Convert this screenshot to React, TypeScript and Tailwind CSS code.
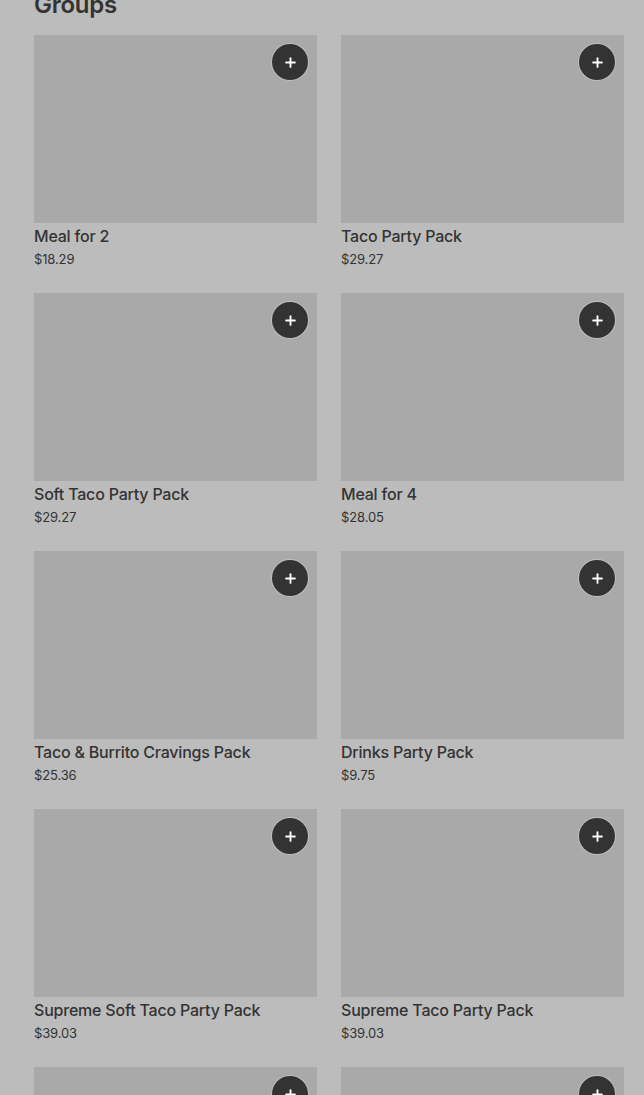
import { Plus } from "lucide-react";

interface Item {
  name: string;
  price: string;
}

const items: Item[] = [
  { name: "Meal for 2", price: "$18.29" },
  { name: "Taco Party Pack", price: "$29.27" },
  { name: "Soft Taco Party Pack", price: "$29.27" },
  { name: "Meal for 4", price: "$28.05" },
  { name: "Taco & Burrito Cravings Pack", price: "$25.36" },
  { name: "Drinks Party Pack", price: "$9.75" },
  { name: "Supreme Soft Taco Party Pack", price: "$39.03" },
  { name: "Supreme Taco Party Pack", price: "$39.03" },
  { name: "Chicken Quesadilla Party Pack", price: "$32.49" },
  { name: "Nachos Party Pack", price: "$27.15" },
];

function Card({ item }: { item: Item }) {
  return (
    <div className="flex flex-col">
      <div className="relative h-[188px] bg-[#a9a9a9]">
        <button className="absolute top-[9px] right-[9px] flex h-9 w-9 items-center justify-center rounded-full bg-[#333333] text-white shadow-[0_0_0_1px_rgba(255,255,255,0.25)]">
          <Plus size={15} strokeWidth={3} />
        </button>
      </div>
      <div className="mt-[3px] text-[16px] leading-5 font-medium tracking-[-0.013em] text-[#333333]">
        {item.name}
      </div>
      <div className="mt-[5px] text-[13px] leading-4 tracking-[-0.01em] text-[#333333]">
        {item.price}
      </div>
    </div>
  );
}

export default function App() {
  return (
    <div
      className="h-[1095px] overflow-hidden bg-[#bcbcbc] pl-[34px]"
      style={{ fontFamily: "Inter, 'Noto Sans', sans-serif" }}
    >
      <h2 className="-mt-[11px] text-[24px] leading-8 font-semibold tracking-[-0.01em] text-[#333333]">
        Groups
      </h2>
      <div className="mt-[14px] grid w-[590px] grid-cols-[283px_283px] gap-x-6 gap-y-[26px]">
        {items.map((item) => (
          <Card key={item.name} item={item} />
        ))}
      </div>
    </div>
  );
}
